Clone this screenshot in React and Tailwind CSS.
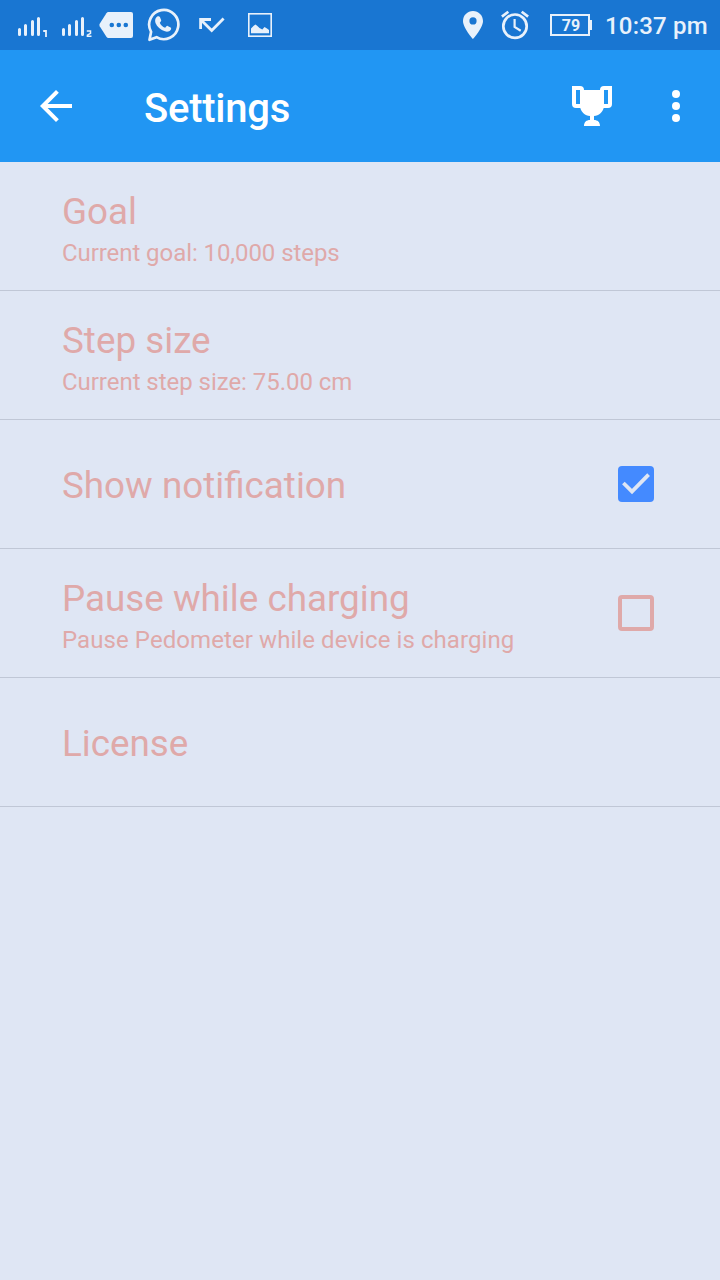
function Signal({ sim }) {
  return (
    <svg className="h-[50px] w-[31px] shrink-0" viewBox="17 0 31 50" fill="none" stroke="#e8f1fb">
      <path d="M19.5 29.5V34.5M25.5 25.5V34.5M32.5 21.5V34.5M38.5 18.5V34.5" strokeWidth="3" strokeLinecap="round" />
      {sim === 1 ? (
        <path d="M43.200 31H46V37" strokeWidth="1.8" />
      ) : (
        <path d="M42.8 31H46.5V33.4L43.4 35.2V36.3H47.5" strokeWidth="1.5" />
      )}
    </svg>
  );
}

function MessageTag() {
  return (
    <svg className="ml-[7px] h-[50px] w-[35px] shrink-0" viewBox="99 0 35 50">
      <path d="M108.5 12H131Q133 12 133 14V36Q133 38 131 38H108.5Q107.2 38 106.4 36.8L99.7 26.2Q99 25 99.7 23.8L106.4 13.2Q107.2 12 108.5 12Z" fill="#e8f1fb" />
      <g fill="#1976d2">
        <circle cx="111.8" cy="25" r="2.3" />
        <circle cx="118.8" cy="25" r="2.3" />
        <circle cx="125.8" cy="25" r="2.3" />
      </g>
    </svg>
  );
}

function WhatsApp() {
  return (
    <svg className="ml-[13px] h-[50px] w-[34px] shrink-0" viewBox="147 0 34 50">
      <g transform="translate(-1.2 -0.6)">
        <path d="M150.7 40.4L152.3 32.4A14.6 14.6 0 1 1 157.7 37.8Z" fill="none" stroke="#e8f1fb" strokeWidth="2.7" strokeLinejoin="round" />
        <path d="M158.8 16.9C159.5 16.7 160.7 16.8 161.1 17.7L162.4 20.9C162.7 21.6 161.4 22.8 161 23.3C162 25.7 163.8 27.4 166.3 28.4C167 27.9 168 26.2 168.8 26.5L171.8 28C172.8 28.5 172.2 29.8 171.8 30.5C170.8 32.2 168.2 32.6 166.2 31.9C161.7 30.5 158.2 27.3 156.7 23.5C155.8 21.2 156.5 17.9 158.8 16.9Z" fill="#e8f1fb" />
      </g>
    </svg>
  );
}

function MissedCall() {
  return (
    <svg className="ml-[17px] h-[50px] w-[28px] shrink-0" viewBox="198 0 28 50" fill="none" stroke="#e8f1fb" strokeWidth="2.8">
      <path d="M200.6 29V19.5H211M200.8 19.7L211.7 30.5L223.6 18.6" />
    </svg>
  );
}

function Picture() {
  return (
    <svg className="ml-[22px] h-[50px] w-[24px] shrink-0" viewBox="248 0 24 50">
      <rect x="248.8" y="13.8" width="22.4" height="22.4" fill="none" stroke="#e8f1fb" strokeWidth="1.6" />
      <path d="M251 33.3V28.5L253.7 25.8L255.5 24.5L257.4 26.1L259.5 28L262.3 29.5L264.5 27L267 28.4L269 30V33.3Z" fill="#e8f1fb" />
    </svg>
  );
}

function Pin() {
  return (
    <svg className="h-[50px] w-[20px] shrink-0" viewBox="463 0 20 50">
      <path fillRule="evenodd" d="M473 11C467.4 11 463 15.4 463 21C463 28.2 473 39 473 39S483 28.2 483 21C483 15.4 478.6 11 473 11ZM473 17.3A3.6 3.6 0 1 1 473 24.5A3.6 3.6 0 1 1 473 17.3Z" fill="#e8f1fb" />
    </svg>
  );
}

function Alarm() {
  return (
    <svg className="ml-[17px] h-[50px] w-[30px] shrink-0" viewBox="500 0 30 50" fill="none" stroke="#e8f1fb">
      <circle cx="515" cy="26.2" r="11.7" strokeWidth="2.7" />
      <path d="M501.9 16.6L508.3 11.7M528.1 16.6L521.7 11.7" strokeWidth="2.7" />
      <path d="M514.6 19V27L520.7 30.7" strokeWidth="2.2" />
    </svg>
  );
}

function Battery() {
  return (
    <svg className="ml-[20px] h-[50px] w-[42px] shrink-0" viewBox="550 0 42 50">
      <rect x="551" y="15" width="38" height="20" fill="none" stroke="#e8f1fb" strokeWidth="2" />
      <rect x="590" y="20" width="2" height="10" fill="#e8f1fb" />
      <text x="571" y="31.3" textAnchor="middle" fill="#e8f1fb" className="font-['Roboto',sans-serif] text-[16px] font-bold">79</text>
    </svg>
  );
}

function StatusBar() {
  return (
    <div className="flex h-[50px] items-center bg-[#1976d2] pl-[17px] pr-3">
      <Signal sim={1} />
      <div className="ml-[13px] flex">
        <Signal sim={2} />
      </div>
      <MessageTag />
      <WhatsApp />
      <MissedCall />
      <Picture />
      <div className="ml-auto flex items-center">
        <Pin />
        <Alarm />
        <Battery />
        <span className="ml-[13px] w-[103px] whitespace-nowrap pt-[2px] text-[24px] font-medium leading-[50px] tracking-[0.2px] text-[#e8f1fb]">10:37 pm</span>
      </div>
    </div>
  );
}

function AppBar() {
  return (
    <header className="flex h-[112px] items-center bg-[#2196f3] pl-8 pr-5 text-white">
      <button aria-label="Back" className="flex size-12 items-center justify-center">
        <svg className="size-12" viewBox="0 0 24 24" fill="currentColor">
          <path d="M20 11H7.83l5.59-5.59L12 4l-8 8 8 8 1.41-1.41L7.83 13H20v-2z" />
        </svg>
      </button>
      <h1 className="ml-16 pt-[6px] text-[40px] font-medium leading-[48px] tracking-[-0.25px]">Settings</h1>
      <button aria-label="Achievements" className="ml-auto">
        <svg className="size-12" viewBox="568 82 48 48" fill="currentColor">
          <path fillRule="evenodd" d="M572 86H580Q584 86 584 90H600Q600 86 604 86H612V104Q612 108 608 108H603.7C602.5 112.5 599 115.4 594 116V120C597.5 120 600 122 600 126H584C584 122 586.5 120 590 120V116C585 115.4 581.5 112.5 580.3 108H576Q572 108 572 104ZM576 90V104H580V90ZM604 90V104H608V90Z" />
        </svg>
      </button>
      <button aria-label="More options" className="ml-9">
        <svg className="size-12" viewBox="0 0 24 24" fill="currentColor">
          <circle cx="12" cy="6" r="2" />
          <circle cx="12" cy="12" r="2" />
          <circle cx="12" cy="18" r="2" />
        </svg>
      </button>
    </header>
  );
}

function Checkbox({ checked }) {
  return (
    <svg className="size-9 shrink-0" viewBox="0 0 36 36" role="checkbox" aria-checked={checked}>
      {checked ? (
        <>
          <rect width="36" height="36" rx="4" fill="#448aff" />
          <path d="M5.4 17L14 25.5L30.6 8.7" fill="none" stroke="#dfe6f4" strokeWidth="3.8" />
        </>
      ) : (
        <rect x="2" y="2" width="32" height="32" rx="2" fill="none" stroke="#dfa9a9" strokeWidth="4" />
      )}
    </svg>
  );
}

function Row({ title, summary, checked, summaryClass }) {
  return (
    <li className="flex h-[129px] items-center border-b border-[#c0c7d6] pl-[62px] pr-[66px]">
      <div className="flex-1 pt-1 text-[#dfa9a9]">
        <div className="text-[36.8px] leading-[44px]">{title}</div>
        {summary && <div className={`mt-[5px] text-[24px] leading-[28px] ${summaryClass}`}>{summary}</div>}
      </div>
      {checked !== undefined && <Checkbox checked={checked} />}
    </li>
  );
}

const settings = [
  { title: "Goal", summary: "Current goal: 10,000 steps", summaryClass: "tracking-[-0.07px]" },
  { title: "Step size", summary: "Current step size: 75.00 cm", summaryClass: "tracking-[-0.04px]" },
  { title: "Show notification", checked: true },
  { title: "Pause while charging", summary: "Pause Pedometer while device is charging", summaryClass: "tracking-[0.08px]", checked: false },
  { title: "License" },
];

export default function App() {
  return (
    <div className="min-h-screen w-full bg-[#dfe6f4] font-['Roboto',sans-serif]">
      <StatusBar />
      <AppBar />
      <ul>
        {settings.map((item) => (
          <Row key={item.title} {...item} />
        ))}
      </ul>
    </div>
  );
}
